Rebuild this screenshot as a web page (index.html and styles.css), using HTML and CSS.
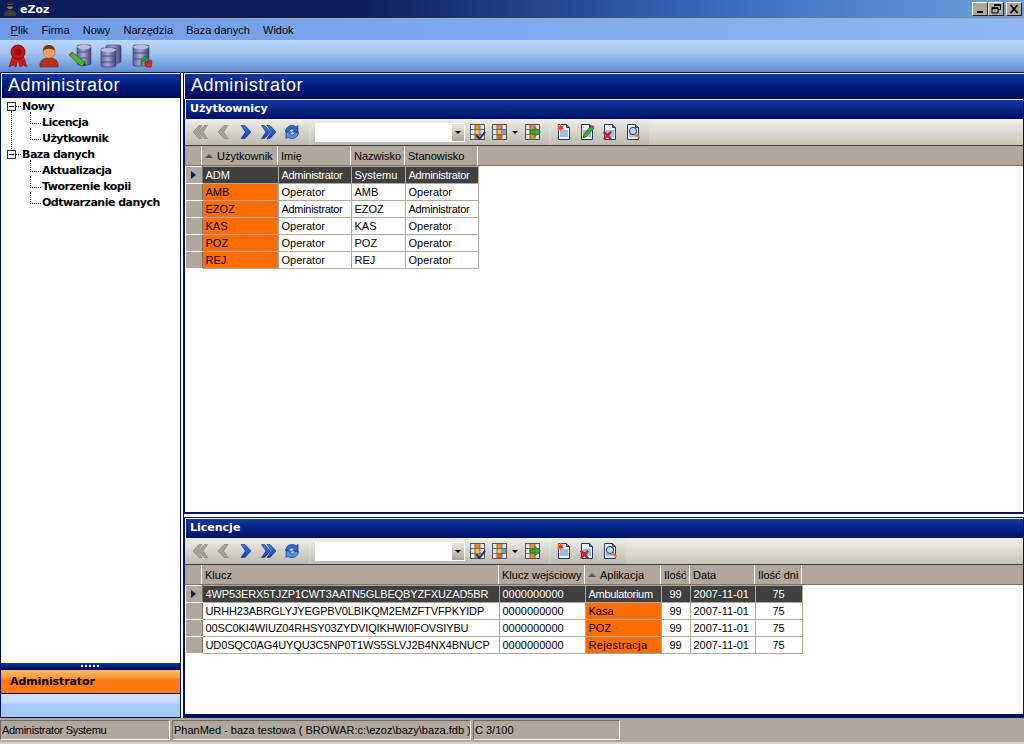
FILE: index.html
```html
<!DOCTYPE html>
<html lang="pl">
<head>
<meta charset="utf-8">
<title>eZoz</title>
<link rel="stylesheet" href="styles.css">
</head>
<body>
<svg class="defs" width="0" height="0" aria-hidden="true">
  <defs>
    <linearGradient id="db" x1="0" x2="1" y1="0" y2="0"><stop offset="0" stop-color="#5c5f95"/><stop offset=".45" stop-color="#a9abd6"/><stop offset="1" stop-color="#3f4174"/></linearGradient>
    <linearGradient id="blu" x1="0" x2="0" y1="0" y2="1"><stop offset="0" stop-color="#3a78e8"/><stop offset="1" stop-color="#123cb0"/></linearGradient>
    <symbol id="first" viewBox="0 0 16 16"><path d="M7 1.500 1 8l6 6.500h3L5.500 8 10 1.500zM12.500 1.500 6.500 8l6 6.500h3L11 8l4.500-6.500z" fill="#a3a39c" stroke="#7a7a72" stroke-width=".6"/></symbol>
    <symbol id="prev" viewBox="0 0 16 16"><path d="M9 1.500 3 8l6 6.500h4L8.500 8 13 1.500z" fill="#a3a39c" stroke="#7a7a72" stroke-width=".6"/></symbol>
    <symbol id="next" viewBox="0 0 16 16"><path d="M7 1.500 13 8l-6 6.500H3L7.500 8 3 1.500z" fill="url(#blu)" stroke="#0f2c86" stroke-width=".6"/></symbol>
    <symbol id="last" viewBox="0 0 16 16"><path d="M3.500 1.500 9.500 8l-6 6.500h-3L5 8 .5 1.500zM9 1.500 15 8l-6 6.500H6L10.500 8 6 1.500z" fill="url(#blu)" stroke="#0f2c86" stroke-width=".6"/></symbol>
    <symbol id="refresh" viewBox="0 0 16 16"><path d="M1.500 7.500C2 3 6 1 9 1.500c1.500.2 2.500 1 3 1.500l2-1.500V8H8.500l2-2C9 4.500 6 4.500 5 7.500z" fill="#2a6ae0" stroke="#0f2c86" stroke-width=".7"/><path d="M14.500 8.500C14 13 10 15 7 14.500c-1.500-.2-2.500-1-3-1.500l-2 1.500V8h5.500l-2 2c1.500 1.500 4.500 1.500 5.500-1.500z" fill="#4a94f4" stroke="#0f2c86" stroke-width=".7"/></symbol>

    <g id="gridframe"><rect x=".5" y=".5" width="14" height="15" fill="#e6e6e6" stroke="#555"/><rect x="5" y="1" width="5" height="14" fill="#f58a1f"/><rect x="5" y="6" width="5" height="4" fill="#fbc04a"/><path d="M1 5.500h13M1 10.500h13M5 1v14M10 1v14" stroke="#6a6a6a"/></g>
    <symbol id="gridcheck" viewBox="0 0 16 16"><use href="#gridframe"/><path d="M7 11l2.500 3L14.500 7.500l1 1L9.500 16 6 12z" fill="#10248c" stroke="#10248c" stroke-width=".5"/></symbol>
    <symbol id="gridcolor" viewBox="0 0 16 16"><use href="#gridframe"/><rect x="10.500" y="6" width="3.500" height="4" fill="#6ba0e8"/><rect x="5.500" y="11" width="4" height="4" fill="#f05a10"/></symbol>
    <symbol id="gridarrow" viewBox="0 0 16 16"><use href="#gridframe"/><path d="M5 6.500h5V3.500l5.500 4.500-5.500 4.500v-3H5z" fill="#3ab030" stroke="#12601a" stroke-width=".6"/></symbol>
    <g id="docframe"><path d="M2.500 .5h8l3 3v12h-11z" fill="#f4f6fb" stroke="#27356f"/><path d="M10.500 .5v3h3" fill="#4a90a8" stroke="#27356f"/><rect x="4" y="6" width="8" height="7" fill="#9bbce6"/></g>
    <symbol id="docnew" viewBox="0 0 16 16"><use href="#docframe"/><path d="M4.500 0l1 2 2.300-.5L6.800 3.600 8 5.500 5.700 5.600 4.500 7.500 3.300 5.600 1 5.500 2.200 3.600 1.200 1.500 3.500 2z" fill="#f03818" stroke="#f8c020" stroke-width=".7"/></symbol>
    <symbol id="docedit" viewBox="0 0 16 16"><use href="#docframe"/><path d="M5 10l7-8 3 2-7.500 8.500L4 14z" fill="#3fb030" stroke="#15601a" stroke-width=".7"/><path d="M12 2l1-1 2.500 2-.8 1.200z" fill="#d83030"/></symbol>
    <symbol id="docdel" viewBox="0 0 16 16"><use href="#docframe"/><path d="M1 8.500l2-1 2.500 2.500 2.500-2.500 1.500 1-2.500 3 2.500 3-1.500 1-2.500-2.500-3 2.500-1-1 2.500-3z" fill="#e01818" stroke="#801010" stroke-width=".5"/></symbol>
    <symbol id="docview" viewBox="0 0 16 16"><use href="#docframe"/><circle cx="8" cy="7" r="3.600" fill="#bcd8f8" stroke="#27356f"/><path d="M10.500 10l4 4" stroke="#f07818" stroke-width="2.400"/></symbol>
  </defs>
</svg>

<div class="app">
  <header class="titlebar">
    <div class="titleleft">
      <svg class="appicon" viewBox="0 0 14 14"><circle cx="7" cy="4" r="3" fill="#b9794f"/><rect x="3.500" y="0" width="7" height="2.500" fill="#2a2a2a"/><rect x="4" y="3" width="6" height="1.500" fill="#111"/><path d="M1 14c0-5 3-6 6-6s6 1 6 6z" fill="#3a3a3a"/></svg>
      <span class="apptitle">eZoz</span>
    </div>
    <div class="winbtns">
      <button class="winbtn"><svg viewBox="0 0 14 12"><rect x="4" y="8" width="6" height="2" fill="#000"/></svg></button>
      <button class="winbtn"><svg viewBox="0 0 14 12"><path d="M5.500 3.500v-2h6v5h-2M3 4.500h6v5.500H3zM3 5.500h6M5.500 2.500h6" fill="none" stroke="#000"/></svg></button>
      <button class="winbtn gapbtn"><svg viewBox="0 0 14 12"><path d="M3.500 2l7 8M10.500 2l-7 8" stroke="#000" stroke-width="1.800"/></svg></button>
    </div>
  </header>

  <nav class="menubar">
    <span class="menuitem"><u>P</u>lik</span><span class="menuitem">Firma</span><span class="menuitem">Nowy</span><span class="menuitem">Narzędzia</span><span class="menuitem">Baza danych</span><span class="menuitem">Widok</span>
  </nav>

  <div class="toolbar">
    <svg class="bigicon" viewBox="0 0 24 24"><path d="M7 11 3 23l4-2 3 2 2-8 2 8 3-2 4 2-4-12z" fill="#d01818" stroke="#7a0c0c" stroke-width=".6"/><circle cx="12" cy="8" r="7" fill="#c81414" stroke="#7a0c0c"/><circle cx="12" cy="8" r="3.500" fill="#8e1010"/></svg>
    <svg class="bigicon" viewBox="0 0 24 24"><path d="M3 23c-1-7 4-9 9-9s10 2 9 9z" fill="#b8301c" stroke="#6d1a10" stroke-width=".6"/><circle cx="12" cy="8" r="6" fill="#f2a066" stroke="#a85a25" stroke-width=".6"/><path d="M6 7c0-5 3-6 6-6s6 2 6 6c-3-3-9-3-12 0z" fill="#6c3d1c"/></svg>
    <svg class="bigicon" viewBox="0 0 24 24"><rect x="9" y="1" width="14" height="20" rx="2" fill="url(#db)" stroke="#33356a" stroke-width=".6"/><ellipse cx="16" cy="3" rx="7" ry="2.200" fill="#b9bbdf"/><path d="M9 8h14M9 14h14" stroke="#4b4d85"/><path d="M1 11l3-3 13 10-2 4-2 0z" fill="#46b82e" stroke="#1c5a12" stroke-width=".7"/><path d="M1 11l3-3 1 1-3 3z" fill="#d83030"/><path d="M15 22l2-4 1 4z" fill="#333"/></svg>
    <svg class="bigicon" viewBox="0 0 24 24"><rect x="7" y="1" width="15" height="18" rx="2" fill="url(#db)" stroke="#33356a" stroke-width=".6"/><rect x="2" y="4" width="15" height="19" rx="2" fill="url(#db)" stroke="#33356a" stroke-width=".6"/><ellipse cx="9.500" cy="6" rx="7.500" ry="2.200" fill="#b9bbdf"/><path d="M2 12h15M2 18h15" stroke="#4b4d85"/></svg>
    <svg class="bigicon" viewBox="0 0 24 24"><rect x="3" y="1" width="16" height="21" rx="2" fill="url(#db)" stroke="#33356a" stroke-width=".6"/><ellipse cx="11" cy="3" rx="8" ry="2.200" fill="#b9bbdf"/><path d="M3 9h16M3 15h16" stroke="#4b4d85"/><path d="M11 22v-6l4-4 2 2 1-3v7h-3l1-2-2-1z" fill="#2ba048" stroke="#125a22" stroke-width=".6"/><path d="M16 23l-1-5 3 1 2-3 2 1-1 6z" fill="#e03020" stroke="#7a0c0c" stroke-width=".6"/></svg>
  </div>

  <main class="workspace">
    <aside class="sidebar">
      <h2 class="bigtitle">Administrator</h2>
      <div class="treearea">
        <ul class="tree">
          <li class="rootnode">
            <div class="rootlabel"><span class="expander"></span>Nowy</div>
            <ul class="children">
              <li>Licencja</li>
              <li>Użytkownik</li>
            </ul>
          </li>
          <li class="rootnode">
            <div class="rootlabel"><span class="expander"></span>Baza danych</div>
            <ul class="children">
              <li>Aktualizacja</li>
              <li>Tworzenie kopii</li>
              <li>Odtwarzanie danych</li>
            </ul>
          </li>
        </ul>
      </div>
      <div class="grip"><span class="gripdots"></span></div>
      <div class="tabactive">Administrator</div>
      <div class="tabempty"></div>
    </aside>

    <div class="content">
      <h2 class="bigtitle">Administrator</h2>

      <section class="panel panel-users">
        <h3 class="paneltitle">Użytkownicy</h3>
        <div class="gridbar">
          <div class="toolgroup navgroup">
            <svg class="nav"><use href="#first"/></svg><svg class="nav"><use href="#prev"/></svg><svg class="nav"><use href="#next"/></svg><svg class="nav"><use href="#last"/></svg><svg class="nav"><use href="#refresh"/></svg>
          </div>
          <div class="toolgroup filtergroup">
            <div class="combo"><span class="comboarrow"></span></div>
            <svg class="tool"><use href="#gridcheck"/></svg>
            <svg class="tool"><use href="#gridcolor"/></svg><span class="droparrow"></span>
            <svg class="tool lasttool"><use href="#gridarrow"/></svg>
          </div>
          <div class="toolgroup docgroup">
            <svg class="tool"><use href="#docnew"/></svg><svg class="tool"><use href="#docedit"/></svg><svg class="tool"><use href="#docdel"/></svg><svg class="tool"><use href="#docview"/></svg>
          </div>
        </div>
        <div class="gridhead">
          <span class="hc ind"></span><span class="hc u1"><i class="sortup"></i>Użytkownik</span><span class="hc u2">Imię</span><span class="hc u3">Nazwisko</span><span class="hc u4">Stanowisko</span>
        </div>
        <table class="grid">
          <colgroup><col class="ind"><col class="u1"><col class="u2"><col class="u3"><col class="u4"></colgroup>
          <tr class="cur"><th class="marker"></th><td>ADM</td><td class="tight">Administrator</td><td>Systemu</td><td class="tight">Administrator</td></tr>
          <tr><th></th><td class="hl">AMB</td><td>Operator</td><td>AMB</td><td>Operator</td></tr>
          <tr><th></th><td class="hl">EZOZ</td><td class="tight">Administrator</td><td>EZOZ</td><td class="tight">Administrator</td></tr>
          <tr><th></th><td class="hl">KAS</td><td>Operator</td><td>KAS</td><td>Operator</td></tr>
          <tr><th></th><td class="hl">POZ</td><td>Operator</td><td>POZ</td><td>Operator</td></tr>
          <tr><th></th><td class="hl">REJ</td><td>Operator</td><td>REJ</td><td>Operator</td></tr>
        </table>
      </section>

      <section class="panel panel-lic">
        <h3 class="paneltitle">Licencje</h3>
        <div class="gridbar">
          <div class="toolgroup navgroup">
            <svg class="nav"><use href="#first"/></svg><svg class="nav"><use href="#prev"/></svg><svg class="nav"><use href="#next"/></svg><svg class="nav"><use href="#last"/></svg><svg class="nav"><use href="#refresh"/></svg>
          </div>
          <div class="toolgroup filtergroup">
            <div class="combo"><span class="comboarrow"></span></div>
            <svg class="tool"><use href="#gridcheck"/></svg>
            <svg class="tool"><use href="#gridcolor"/></svg><span class="droparrow"></span>
            <svg class="tool lasttool"><use href="#gridarrow"/></svg>
          </div>
          <div class="toolgroup docgroup docgroup-short">
            <svg class="tool"><use href="#docnew"/></svg><svg class="tool"><use href="#docdel"/></svg><svg class="tool"><use href="#docview"/></svg>
          </div>
        </div>
        <div class="gridhead">
          <span class="hc ind"></span><span class="hc l1">Klucz</span><span class="hc l2">Klucz wejściowy</span><span class="hc l3"><i class="sortup"></i>Aplikacja</span><span class="hc l4">Ilość</span><span class="hc l5">Data</span><span class="hc l6">Ilość dni</span>
        </div>
        <table class="grid">
          <colgroup><col class="ind"><col class="l1"><col class="l2"><col class="l3"><col class="l4"><col class="l5"><col class="l6"></colgroup>
          <tr class="cur"><th class="marker"></th><td class="mono">4WP53ERX5TJZP1CWT3AATN5GLBEQBYZFXUZAD5BR</td><td>0000000000</td><td class="tight">Ambulatorium</td><td class="ctr">99</td><td>2007-11-01</td><td class="ctr">75</td></tr>
          <tr><th></th><td class="mono">URHH23ABRGLYJYEGPBV0LBIKQM2EMZFTVFPKYIDP</td><td>0000000000</td><td class="hl">Kasa</td><td class="ctr">99</td><td>2007-11-01</td><td class="ctr">75</td></tr>
          <tr><th></th><td class="mono">00SC0KI4WIUZ04RHSY03ZYDVIQIKHWI0FOVSIYBU</td><td>0000000000</td><td class="hl">POZ</td><td class="ctr">99</td><td>2007-11-01</td><td class="ctr">75</td></tr>
          <tr><th></th><td class="mono">UD0SQC0AG4UYQU3C5NP0T1WS5SLVJ2B4NX4BNUCP</td><td>0000000000</td><td class="hl wide">Rejestracja</td><td class="ctr">99</td><td>2007-11-01</td><td class="ctr">75</td></tr>
        </table>
      </section>
    </div>
  </main>

  <footer class="statusbar">
    <span class="stat s1">Administrator Systemu</span>
    <span class="stat s2">PhanMed - baza testowa ( BROWAR:c:\ezoz\bazy\baza.fdb )</span>
    <span class="stat s3">C 3/100</span>
  </footer>
</div>
</body>
</html>
```

FILE: styles.css
```css
* { box-sizing: border-box; }
html, body { margin: 0; padding: 0; }
body { font-family: "Liberation Sans", Arial, sans-serif; font-size: 11px; color: #000; overflow: hidden; background: #b0a89c; }
.defs { position: absolute; }
h2, h3, ul { margin: 0; padding: 0; list-style: none; font-weight: normal; }
.app { width: 1024px; height: 744px; display: flex; flex-direction: column; }

.titlebar { height: 19px; flex: none; display: flex; justify-content: space-between; align-items: flex-start; background: linear-gradient(90deg, #0a1c5a 0, #0c1f5c 35%, #3a6fc0 72%, #6da0dc 100%); border-bottom: 1px solid #b0a89c; }
.titleleft { display: flex; align-items: center; height: 18px; padding-left: 3px; gap: 3px; }
.appicon { width: 14px; height: 14px; }
.apptitle { color: #fff; font-weight: bold; font-size: 11px; font-family: "DejaVu Sans", sans-serif; }
.winbtns { display: flex; padding: 2px 2px 0 0; }
.winbtn { width: 16px; height: 14px; padding: 0; border: 1px solid; border-color: #fff #222 #222 #fff; background: #b0a89c; display: block; }
.winbtn svg { display: block; width: 14px; height: 12px; }
.gapbtn { margin-left: 2px; }

.menubar { height: 21px; flex: none; display: flex; align-items: center; padding-left: 4px; background: linear-gradient(90deg, #6e9be8, #8fb7f5); }
.menuitem { padding: 0 6.6px; font-size: 11px; color: #000; }

.toolbar { height: 32px; flex: none; display: flex; align-items: flex-start; padding: 4px 0 0 6px; gap: 7px; background: linear-gradient(180deg, #bcd7fb 0, #a5c5f2 40%, #5d8cd4 100%); }
.bigicon { width: 24px; height: 24px; flex: none; }

.workspace { flex: 1; min-height: 0; display: flex; background: #fff; border-top: 1px solid #00105c; }

.sidebar { width: 181px; flex: none; display: flex; flex-direction: column; border: 1px solid #00105c; border-top: 0; background: #fff; }
.bigtitle { height: 25px; flex: none; padding-left: 6px; color: #fff; font-size: 18px; letter-spacing: .45px; line-height: 23px; border-top: 1px solid #fff; background: linear-gradient(180deg, #0f38a0 0, #001a78 50%, #000a5c 100%); }
.sidebar .bigtitle { border-left: 1px solid #fff; }
.treearea { flex: 1; min-height: 0; background: #fff; padding-top: 1px; }
.tree { font-family: "DejaVu Sans", sans-serif; font-weight: bold; font-size: 11px; letter-spacing: -.5px; }
.tree ul { font-weight: bold; }
.rootnode { position: relative; }
.rootnode:first-child::before { content: ""; position: absolute; left: 10px; top: 12px; height: 44px; border-left: 1px dotted #000; }
.rootlabel { height: 16px; line-height: 16px; padding-left: 21px; position: relative; }
.expander { position: absolute; left: 6px; top: 3px; width: 9px; height: 9px; border: 1px solid #333; background: linear-gradient(#000, #000) center / 5px 1px no-repeat #fff; z-index: 1; }
.expander::after { content: ""; position: absolute; left: 8px; top: 3px; width: 5px; border-top: 1px dotted #000; }
.children li { height: 16px; line-height: 16px; padding-left: 41px; position: relative; }
.children li::before { content: ""; position: absolute; left: 29px; top: -3px; height: 11px; width: 10px; border-left: 1px dotted #000; border-bottom: 1px dotted #000; }
.grip { height: 8px; flex: none; background: linear-gradient(#0f38a0, #000a5c); display: flex; justify-content: center; align-items: center; border-top: 1px solid #fff; border-bottom: 1px solid #000a5c; }
.gripdots { width: 20px; height: 2px; background: repeating-linear-gradient(90deg, #fff 0 2px, transparent 2px 4px); }
.tabactive { height: 24px; flex: none; padding-left: 9px; font-family: "DejaVu Sans", sans-serif; font-weight: bold; font-size: 11px; letter-spacing: -.1px; line-height: 24px; color: #000; background: linear-gradient(180deg, #ffb866 0, #ffa040 30%, #ff7a12 45%, #ff7a12 100%); border-bottom: 1px solid #00105c; }
.tabempty { height: 23px; flex: none; background: linear-gradient(180deg, #cfe2fc 0, #c4daf9 40%, #a5c8f8 45%, #a5c8f8 100%); }

.content { flex: 1; min-width: 0; margin-left: 2px; display: flex; flex-direction: column; border: 1px solid #00105c; border-top: 0; border-right: 0; background: #fff; }
.content .bigtitle { padding-left: 6px; border-left: 1px solid #fff; }
.content > .bigtitle { height: 26px; }
.panel { display: flex; flex-direction: column; background: #fff; border-left: 1px solid #00105c; border-right: 1px solid #00105c; }
.panel-users { height: 415px; border-bottom: 2px solid #00105c; }
.panel-lic { flex: 1; min-height: 0; margin-top: 3px; border-bottom: 3px solid #00105c; border-top: 1px solid #00105c; }
.paneltitle { height: 20px; flex: none; padding-left: 4px; color: #fff; font-family: "DejaVu Sans", sans-serif; font-weight: bold; font-size: 11px; line-height: 18px; border-top: 1px solid #fff; border-left: 1px solid #fff; background: linear-gradient(180deg, #0f38a0, #000f68); }
.gridbar { height: 26px; flex: none; display: flex; align-items: stretch; padding: 0 0 0 1px; background: linear-gradient(180deg, #f0efe9, #c8c5b8); }
.toolgroup { display: flex; align-items: center; border-radius: 3px; background: linear-gradient(180deg, #efeee8, #bdbab0); margin-right: 2px; }
.navgroup { width: 123px; padding-left: 5px; gap: 5px; }
.nav { width: 18px; height: 16px; flex: none; }
.filtergroup { width: 238px; padding-left: 4px; }
.combo { width: 150px; height: 19px; background: #fff; border: 1px solid #fff; position: relative; margin-right: 5px; flex: none; }
.comboarrow { position: absolute; right: 0; top: 0; width: 12px; height: 17px; background: linear-gradient(#e9e7df, #a8a59a); }
.comboarrow::after, .droparrow::after { content: ""; position: absolute; left: 3px; top: 7px; border: 3px solid transparent; border-top: 3px solid #000; border-bottom: 0; }
.tool { width: 16px; height: 16px; flex: none; margin-right: 6px; }
.droparrow { position: relative; width: 10px; height: 16px; margin: 0 4px 0 -5px; flex: none; }
.lasttool { margin-right: 0; margin-left: 2px; }
.docgroup { width: 98px; padding-left: 5px; gap: 3px; }
.docgroup-short { width: 75px; }
.docgroup .tool { margin-right: 4px; }

.gridhead { height: 21px; flex: none; display: flex; padding-left: 1px; background: #b0a89c; border-top: 1px solid #3c3c3c; border-bottom: 1px solid #7a7468; }
.hc { display: block; flex: none; height: 19px; line-height: 20px; padding-left: 3px; font-size: 11px; border-right: 1px solid #fff; white-space: nowrap; overflow: hidden; }
.hc.ind { border-right-color: #fff; padding: 0; }
.sortup { display: inline-block; margin: 0 4px 2px 0; border: 4px solid transparent; border-bottom: 4px solid #555; border-top: 0; }

.ind { width: 16px; }
.u1 { width: 76px; }
.u2 { width: 73px; }
.u3 { width: 54px; }
.u4 { width: 73px; }
.l1 { width: 297px; }
.l2 { width: 86px; }
.l3 { width: 76px; }
.l4 { width: 29px; }
.l5 { width: 65px; }
.l6 { width: 47px; }

.grid { table-layout: fixed; border-collapse: collapse; margin-left: 1px; background: #fff; }
.panel-users .grid { width: 292px; }
.panel-lic .grid { width: 616px; }
.grid tr { height: 17px; }
.grid th { background: #b0a89c; padding: 0; border-bottom: 1px solid #fff; border-right: 1px solid #7a7468; position: relative; }
.grid td { padding: 0 0 0 3px; height: 17px; font-size: 11px; line-height: 15px; border: 1px solid #b0a89c; white-space: nowrap; overflow: hidden; }
.grid .hl { background: #ff6c00; }
.grid .cur td { background: #404040; color: #fff; }
.grid .ctr { text-align: center; padding-left: 0; }
.grid .mono { letter-spacing: -.12px; }
.grid .tight { letter-spacing: -.3px; }
.grid .wide { letter-spacing: .35px; }
.marker::after { content: ""; position: absolute; left: 5px; top: 4px; border: 4px solid transparent; border-left: 5px solid #0a1a60; border-right: 0; }

.statusbar { height: 26px; flex: none; display: flex; align-items: flex-start; background: #b0a89c; padding-top: 2px; border-bottom: 2px solid #d8d4cc; }
.stat { height: 20px; line-height: 18px; padding-left: 1px; font-size: 11px; border: 1px solid; border-color: #6e6a60 #fff #fff #6e6a60; white-space: nowrap; overflow: hidden; }
.s1 { width: 170px; letter-spacing: -.3px; }
.s2 { width: 299px; margin-left: 2px; }
.s3 { width: 147px; margin-left: 2px; }
```
